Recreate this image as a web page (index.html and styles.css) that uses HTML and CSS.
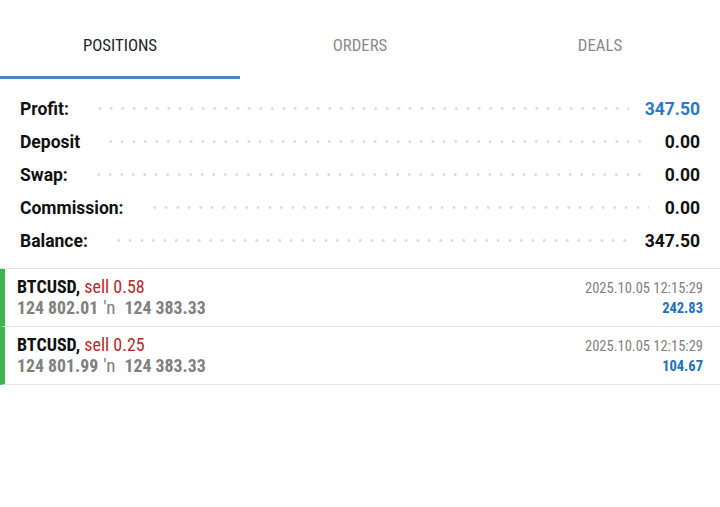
FILE: index.html
```html
<!DOCTYPE html>
<html>
<head>
<meta charset="utf-8">
<link rel="stylesheet" href="styles.css">
</head>
<body>
<div class="tabs">
  <div class="tab active">POSITIONS</div>
  <div class="tab">ORDERS</div>
  <div class="tab">DEALS</div>
</div>
<div class="summary">
  <div class="srow"><span class="label">Profit:</span><span class="dots"></span><span class="val blue">347.50</span></div>
  <div class="srow"><span class="label">Deposit</span><span class="dots"></span><span class="val">0.00</span></div>
  <div class="srow"><span class="label">Swap:</span><span class="dots"></span><span class="val">0.00</span></div>
  <div class="srow"><span class="label">Commission:</span><span class="dots"></span><span class="val">0.00</span></div>
  <div class="srow"><span class="label">Balance:</span><span class="dots"></span><span class="val">347.50</span></div>
</div>
<div class="positions">
  <div class="pos">
    <div class="left">
      <div class="l1"><span class="sym">BTCUSD,</span> <span class="side">sell 0.58</span></div>
      <div class="l2">124 802.01<span class="arr">′n</span>124 383.33</div>
    </div>
    <div class="right">
      <div class="date">2025.10.05 12:15:29</div>
      <div class="pl">242.83</div>
    </div>
  </div>
  <div class="pos">
    <div class="left">
      <div class="l1"><span class="sym">BTCUSD,</span> <span class="side">sell 0.25</span></div>
      <div class="l2">124 801.99<span class="arr">′n</span>124 383.33</div>
    </div>
    <div class="right">
      <div class="date">2025.10.05 12:15:29</div>
      <div class="pl">104.67</div>
    </div>
  </div>
</div>
</body>
</html>
```
FILE: styles.css
```css
html, body {
  margin: 0;
  padding: 0;
  background: #ffffff;
}
body {
  font-family: Roboto, "Liberation Sans", sans-serif;
  width: 720px;
  height: 507px;
  overflow: hidden;
}
.tabs {
  display: flex;
  height: 79px;
}
.tab {
  flex: 1;
  box-sizing: border-box;
  height: 79px;
  padding-top: 35px;
  line-height: 20px;
  text-align: center;
  font-family: Roboto, sans-serif;
  font-stretch: 80%;
  font-size: 16.8px;
  color: #8a8a8a;
}
.tab.active {
  color: #222222;
  border-bottom: 3px solid #4a86c8;
}
.summary {
  padding: 13px 20px 11px 20px;
}
.srow {
  display: flex;
  align-items: center;
  height: 33px;
  font-size: 17.5px;
  font-weight: 700;
  color: #111111;
}
.dots {
  flex: 1;
  height: 3px;
  margin: 0 16px 0 25px;
  background-image: radial-gradient(circle, #dcdcdc 1.2px, transparent 1.7px);
  background-size: 11.5px 3px;
  background-repeat: repeat-x;
}
.val.blue {
  color: #2a78c8;
}
.positions {
  border-top: 1px solid #e6e6e6;
}
.pos {
  display: flex;
  justify-content: space-between;
  box-sizing: border-box;
  height: 58px;
  border-left: 5px solid #3db450;
  border-bottom: 1px solid #e6e6e6;
  padding: 8px 17px 0 12px;
  font-family: Roboto, sans-serif;
  font-stretch: 80%;
}
.l1 {
  line-height: 20px;
  font-size: 18px;
}
.sym {
  font-weight: 700;
  color: #111111;
}
.side {
  color: #b8282a;
}
.l2 {
  line-height: 21px;
  font-size: 17.8px;
  font-weight: 700;
  color: #808080;
}
.arr {
  font-weight: 400;
  font-size: 19px;
  margin: 0 9px 0 5px;
}
.right {
  text-align: right;
  padding-top: 2px;
}
.date {
  line-height: 20px;
  font-size: 14.5px;
  color: #808080;
}
.pl {
  line-height: 20px;
  font-size: 14.5px;
  font-weight: 700;
  color: #1f6fc0;
}
```
